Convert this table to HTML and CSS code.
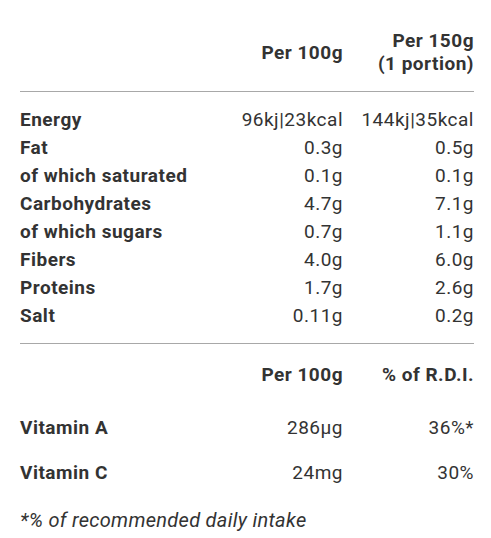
FILE: index.html
```html
<!DOCTYPE html>
<html lang="en">
<head>
    <meta charset="UTF-8">
    <meta name="viewport" content="width=device-width, initial-scale=1.0">
    <title>Nutrition facts</title>
    <link rel="stylesheet" href="styles.css">
</head>
<body>
    <div class="facts">
        <div class="facts-head">
            <span></span>
            <span>Per 100g</span>
            <span>Per 150g<br>(1 portion)</span>
        </div>
        <div class="facts-body">
            <div class="facts-row"><span>Energy</span><span>96kj|23kcal</span><span>144kj|35kcal</span></div>
            <div class="facts-row"><span>Fat</span><span>0.3g</span><span>0.5g</span></div>
            <div class="facts-row"><span>of which saturated</span><span>0.1g</span><span>0.1g</span></div>
            <div class="facts-row"><span>Carbohydrates</span><span>4.7g</span><span>7.1g</span></div>
            <div class="facts-row"><span>of which sugars</span><span>0.7g</span><span>1.1g</span></div>
            <div class="facts-row"><span>Fibers</span><span>4.0g</span><span>6.0g</span></div>
            <div class="facts-row"><span>Proteins</span><span>1.7g</span><span>2.6g</span></div>
            <div class="facts-row"><span>Salt</span><span>0.11g</span><span>0.2g</span></div>
        </div>
        <div class="vitamins">
            <div class="vitamins-head"><span></span><span>Per 100g</span><span>% of R.D.I.</span></div>
            <div class="vitamins-row"><span>Vitamin A</span><span>286µg</span><span>36%*</span></div>
            <div class="vitamins-row"><span>Vitamin C</span><span>24mg</span><span>30%</span></div>
        </div>
        <p class="note">*% of recommended daily intake</p>
    </div>
</body>
</html>
```
FILE: styles.css
```css
body {
    margin: 0;
    background: #fff;
    color: #333;
    font-family: 'Roboto', 'Liberation Sans', sans-serif;
    font-size: 19px;
    letter-spacing: 0.5px;
}

.facts {
    padding: 29px 17px 0 20px;
}

.facts-head,
.facts-row,
.vitamins-head,
.vitamins-row {
    display: grid;
    grid-template-columns: 1fr 120px 131px;
    align-items: end;
}

.facts-head span,
.facts-row span + span,
.vitamins-head span,
.vitamins-row span + span {
    text-align: right;
}

.facts-head {
    align-items: center;
    font-weight: 700;
    line-height: 23px;
    padding-bottom: 16px;
    border-bottom: 1px solid #a8a8a8;
}

.facts-body {
    padding: 14px 0 13px;
    border-bottom: 1px solid #a8a8a8;
}

.facts-row {
    line-height: 28px;
}

.facts-row span:first-child,
.vitamins-row span:first-child {
    font-weight: 700;
}

.vitamins-head {
    font-weight: 700;
    line-height: 28px;
    padding-top: 17px;
}

.vitamins-row {
    line-height: 28px;
    margin-top: 17px;
}

.vitamins-head + .vitamins-row {
    margin-top: 25px;
}

.note {
    margin: 19px 0 0;
    font-size: 20px;
    font-style: italic;
    letter-spacing: 0.3px;
    line-height: 28px;
}
```
